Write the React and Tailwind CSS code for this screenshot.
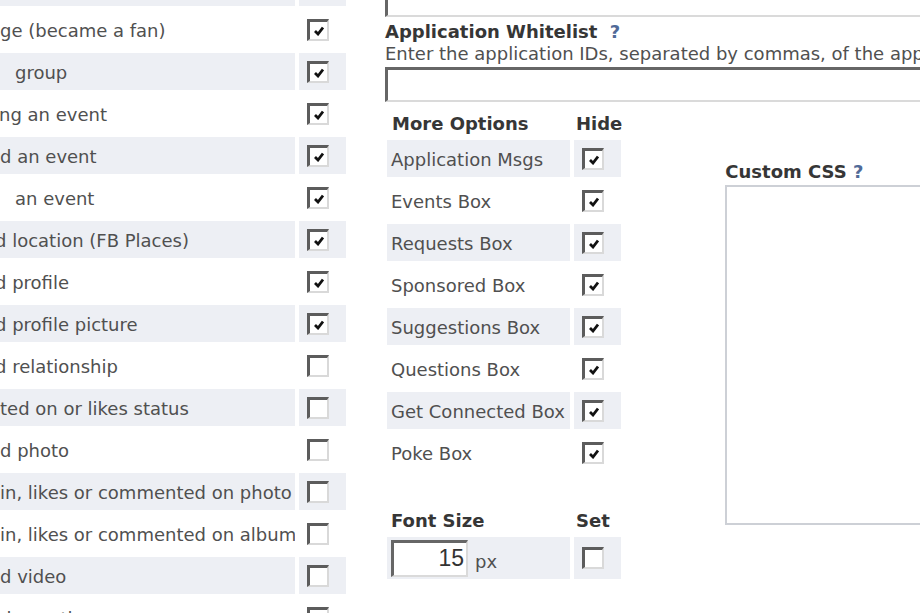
import React from 'react';

const leftRows = [
  { text: 'page (became a fan)', offset: '-ml-[12px]', shade: true, checked: true },
  { text: 'ge (became a fan)', offset: 'ml-0', shade: false, checked: true },
  { text: 'group', offset: 'ml-[15px]', shade: true, checked: true },
  { text: 'ng an event', offset: '-ml-[1px]', shade: false, checked: true },
  { text: 'd an event', offset: 'ml-0', shade: true, checked: true },
  { text: 'an event', offset: 'ml-[15px]', shade: false, checked: true },
  { text: 'd location (FB Places)', offset: '-ml-[5px]', shade: true, checked: true },
  { text: 'd profile', offset: '-ml-[5px]', shade: false, checked: true },
  { text: 'd profile picture', offset: '-ml-[5px]', shade: true, checked: true },
  { text: 'd relationship', offset: '-ml-[5px]', shade: false, checked: false },
  { text: 'ted on or likes status', offset: 'ml-0', shade: true, checked: false },
  { text: 'd photo', offset: 'ml-0', shade: false, checked: false },
  { text: 'in, likes or commented on photo', offset: 'ml-0', shade: true, checked: false },
  { text: 'in, likes or commented on album', offset: 'ml-0', shade: false, checked: false },
  { text: 'd video', offset: 'ml-0', shade: true, checked: false },
  { text: 'd question', offset: 'ml-0', shade: false, checked: false },
];

const moreOptions = [
  { label: 'Application Msgs', shade: true },
  { label: 'Events Box', shade: false },
  { label: 'Requests Box', shade: true },
  { label: 'Sponsored Box', shade: false },
  { label: 'Suggestions Box', shade: true },
  { label: 'Questions Box', shade: false },
  { label: 'Get Connected Box', shade: true },
  { label: 'Poke Box', shade: false },
];

const Checkbox = ({ checked }) => (
  <div className="w-[22px] h-[22px] shrink-0 bg-white border-t-[3px] border-l-[3px] border-r-2 border-b-2 border-t-[#5c5c5c] border-l-[#5c5c5c] border-r-[#d9d9d9] border-b-[#d9d9d9] flex items-center justify-center">
    {checked && (
      <svg viewBox="0 0 10 10" className="w-[10px] h-[10px] mt-[2px] ml-[1px]">
        <path d="M1 5 L4 8 L9 1.5" fill="none" stroke="#111" strokeWidth="2.8" />
      </svg>
    )}
  </div>
);

const Question = () => <span className="text-[#506a98] font-bold">?</span>;

const App = () => {
  return (
    <div className="w-[920px] h-[613px] overflow-hidden bg-white flex font-['DejaVu_Sans',sans-serif] text-[18px] text-[#505050]">
      <div className="w-[347px] shrink-0 flex flex-col gap-[5px] -mt-[31px]">
        {leftRows.map((row, i) => (
          <div key={i} className="flex gap-[4px] h-[37px] shrink-0">
            <div className={`w-[295px] shrink-0 overflow-hidden flex items-center pt-[2px] ${row.shade ? 'bg-[#edeff4]' : ''}`}>
              <span className={`whitespace-nowrap leading-[22px] ${row.offset}`}>{row.text}</span>
            </div>
            <div className={`w-[47px] shrink-0 flex items-center pl-[8px] ${row.shade ? 'bg-[#edeff4]' : ''}`}>
              <Checkbox checked={row.checked} />
            </div>
          </div>
        ))}
      </div>

      <div className="ml-[38px] flex-1 min-w-0 flex flex-col -mt-[20px]">
        <div className="h-[37px] w-[600px] shrink-0 border-t-2 border-l-[3px] border-b-2 border-t-[#666] border-l-[#666] border-b-[#dadada] bg-white" />
        <div className="mt-[4px] leading-[22px] font-bold text-[#363636] whitespace-nowrap">
          Application Whitelist <span className="ml-[6px]"><Question /></span>
        </div>
        <div className="leading-[22px] whitespace-nowrap">
          Enter the application IDs, separated by commas, of the applications you want to see
        </div>
        <div className="mt-[2px] h-[35px] w-[600px] shrink-0 border-t-[3px] border-l-[3px] border-b-2 border-t-[#666] border-l-[#666] border-b-[#dadada] bg-white" />

        <div className="flex">
          <div className="ml-[2px] flex flex-col">
            <div className="mt-[7px] h-[28px] flex items-center font-bold text-[#363636]">
              <div className="w-[187px] pl-[5px]">More Options</div>
              <div className="pl-[2px]">Hide</div>
            </div>
            <div className="mt-[3px] flex flex-col gap-[5px]">
              {moreOptions.map((opt) => (
                <div key={opt.label} className="flex gap-[4px] h-[37px]">
                  <div className={`w-[183px] flex items-center pl-[4px] pt-[2px] whitespace-nowrap ${opt.shade ? 'bg-[#edeff4]' : ''}`}>
                    {opt.label}
                  </div>
                  <div className={`w-[47px] flex items-center pl-[8px] ${opt.shade ? 'bg-[#edeff4]' : ''}`}>
                    <Checkbox checked />
                  </div>
                </div>
              ))}
            </div>

            <div className="mt-[35px] h-[28px] flex items-center font-bold text-[#363636]">
              <div className="w-[187px] pl-[4px]">Font Size</div>
              <div className="pl-[2px]">Set</div>
            </div>
            <div className="mt-[3px] flex gap-[4px] h-[42px]">
              <div className="w-[183px] flex items-center pl-[4px] bg-[#edeff4]">
                <div className="w-[77px] h-[37px] bg-white border-t-[3px] border-l-[3px] border-r-2 border-b-2 border-t-[#666] border-l-[#666] border-r-[#dadada] border-b-[#dadada] flex items-center justify-end pr-[2px] font-['Liberation_Sans',sans-serif] text-[23px] text-[#333]">
                  15
                </div>
                <span className="ml-[7px] mt-[6px]">px</span>
              </div>
              <div className="w-[47px] flex items-center pl-[8px] bg-[#edeff4]">
                <Checkbox checked={false} />
              </div>
            </div>
          </div>

          <div className="ml-[103px] mt-[59px] flex flex-col">
            <div className="leading-[22px] font-bold text-[#363636] whitespace-nowrap">
              Custom CSS <Question />
            </div>
            <div className="mt-[2px] w-[300px] h-[340px] border-2 border-[#cdd0d6] bg-white" />
          </div>
        </div>
      </div>
    </div>
  );
};

export default App;
